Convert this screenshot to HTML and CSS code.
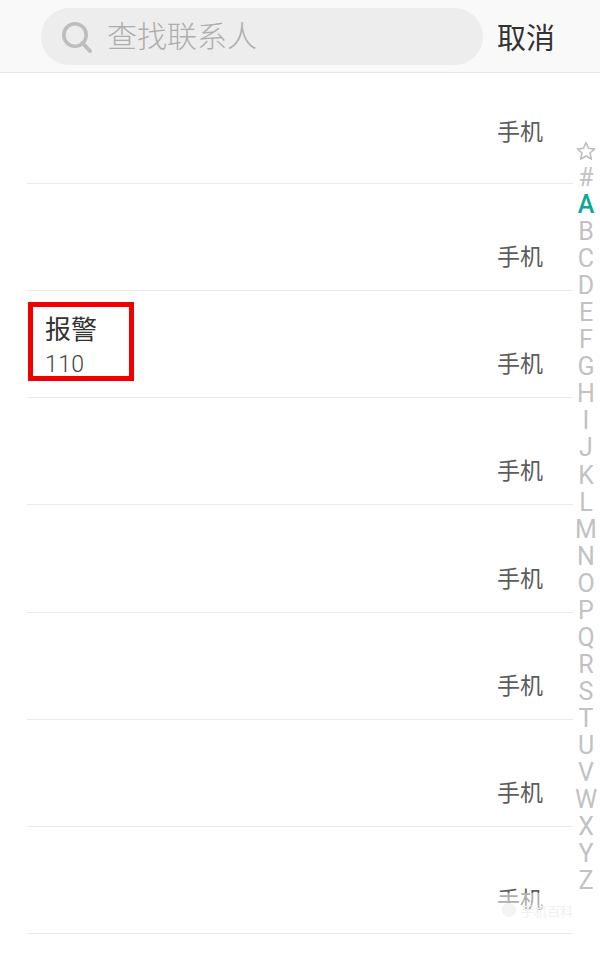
FILE: index.html
```html
<!DOCTYPE html>
<html lang="zh-CN">
<head>
  <meta charset="UTF-8" />
  <meta name="viewport" content="width=device-width, initial-scale=1" />
  <title>查找联系人</title>
  <link rel="stylesheet" href="styles.css">
</head>
<body>
  <header class="top-bar">
    <div class="search-box">
      <svg class="search-icon" viewBox="0 0 32 32" width="32" height="32" aria-hidden="true">
        <circle cx="14" cy="14" r="11.2" fill="none" stroke="#bdbdbd" stroke-width="3.6" />
        <path d="M21.5 22 L29 30" fill="none" stroke="#bdbdbd" stroke-width="4" stroke-linecap="round" />
      </svg>
      <span class="search-hint">查找联系人</span>
    </div>
    <span class="cancel">取消</span>
  </header>

  <ul class="contacts">
    <li class="row row-first"><span class="row-type">手机</span></li>
    <li class="row"><span class="row-type">手机</span></li>
    <li class="row row-marked">
      <div class="marked-box">
        <div class="contact-name">报警</div>
        <div class="contact-number">110</div>
      </div>
      <span class="row-type">手机</span>
    </li>
    <li class="row"><span class="row-type">手机</span></li>
    <li class="row"><span class="row-type">手机</span></li>
    <li class="row"><span class="row-type">手机</span></li>
    <li class="row"><span class="row-type">手机</span></li>
    <li class="row"><span class="row-type">手机</span></li>
  </ul>

  <nav class="alpha-index">
    <svg class="alpha-star" viewBox="0 0 20 20" width="20" height="20" aria-hidden="true">
      <path d="M10 1.6 L12.5 7.3 L18.7 7.9 L14 12 L15.4 18.2 L10 15 L4.6 18.2 L6 12 L1.3 7.9 L7.5 7.3 Z" fill="none" stroke="#bcbcbc" stroke-width="1.5" stroke-linejoin="round" />
    </svg>
    <span>#</span>
    <span class="alpha-current">A</span>
    <span>B</span><span>C</span><span>D</span><span>E</span><span>F</span><span>G</span>
    <span>H</span><span>I</span><span>J</span><span>K</span><span>L</span><span>M</span>
    <span>N</span><span>O</span><span>P</span><span>Q</span><span>R</span><span>S</span>
    <span>T</span><span>U</span><span>V</span><span>W</span><span>X</span><span>Y</span><span>Z</span>
  </nav>

  <div class="watermark">
    <span class="watermark-dot"></span>
    <span class="watermark-text">手机百科</span>
  </div>
</body>
</html>
```

FILE: styles.css
```css
* {
  box-sizing: border-box;
}
html, body {
  margin: 0;
  padding: 0;
}
body {
  position: relative;
  height: 954px;
  overflow: hidden;
  background: white;
  font-family: Roboto, "Noto Sans CJK SC", sans-serif;
  color: #444;
}
.top-bar {
  display: flex;
  align-items: center;
  height: 73px;
  padding: 0 0 0 41px;
  background: #f9f9f9;
  border-bottom: 1px solid #e6e6e6;
}
.search-box {
  display: flex;
  align-items: center;
  width: 442px;
  height: 57px;
  padding-left: 20px;
  border-radius: 29px;
  background: #ededed;
}
.search-icon {
  flex: none;
  width: 32px;
  height: 32px;
  margin-top: 1px;
}
.search-hint {
  margin: -4px 0 0 14px;
  font-size: 30px;
  font-weight: 300;
  color: #adadad;
}
.cancel {
  margin-left: 14px;
  font-size: 29px;
  color: #333;
}
.contacts {
  list-style: none;
  margin: 0;
  padding: 0 27px;
}
.row {
  display: flex;
  justify-content: space-between;
  align-items: flex-end;
  height: 107.14px;
  padding: 0 30px 19px 0;
  border-bottom: 1px solid #ebebeb;
}
.row-first {
  height: 111px;
  padding-bottom: 37px;
}
.row-type {
  margin-left: auto;
  font-size: 23px;
  line-height: 27px;
  color: #5c5c5c;
}
.row-marked {
  position: relative;
}
.marked-box {
  position: absolute;
  left: 1px;
  top: 11px;
  width: 106px;
  height: 79px;
  padding: 5px 0 0 12px;
  border: 5px solid #f00000;
}
.contact-name {
  font-size: 26px;
  line-height: 36px;
  color: #333;
}
.contact-number {
  margin-top: 3px;
  font-size: 23px;
  font-weight: 300;
  line-height: 28px;
  letter-spacing: 0.4px;
  color: #444;
}
.alpha-index {
  position: absolute;
  top: 137px;
  right: 0;
  display: flex;
  flex-direction: column;
  align-items: center;
  width: 28px;
  font-size: 25px;
  line-height: 27.05px;
  color: #c2c2c2;
}
.alpha-star {
  height: 27px;
  padding: 4px 0 3px;
}
.alpha-current {
  font-weight: 500;
  color: #0ba79c;
}
.watermark {
  position: absolute;
  left: 498px;
  top: 893px;
  display: flex;
  align-items: center;
  gap: 5px;
  width: 80px;
  height: 34px;
  padding-left: 4px;
  background: rgba(255, 255, 255, 0.5);
}
.watermark-dot {
  width: 14px;
  height: 14px;
  border-radius: 50%;
  background: #f3f3f3;
}
.watermark-text {
  font-size: 13px;
  color: #f0f0f0;
}
```
